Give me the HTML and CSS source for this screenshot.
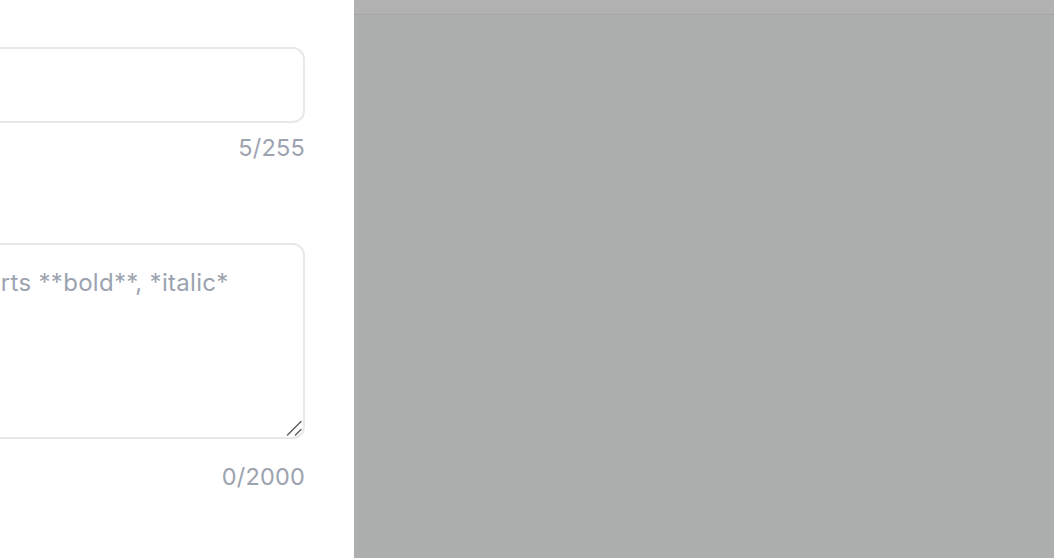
FILE: index.html
```html
<!DOCTYPE html>
<html lang="en">
<head>
    <meta charset="UTF-8">
    <title>Edit item</title>
    <link rel="stylesheet" href="styles.css">
</head>
<body>
<div class="page">
    <aside class="panel">
        <form class="form">
            <div class="field field-title">
                <input class="input" type="text" value="">
                <div class="count">5/255</div>
            </div>
            <div class="field field-desc">
                <div class="area-wrap">
                    <textarea class="area" placeholder="Supports **bold**, *italic*"></textarea>
                    <svg class="grip" width="16" height="16" viewBox="0 0 16 16">
                        <path d="M1.5 15 L15 1.5 M9.5 15 L15 9.5" stroke="#5b5b5b" stroke-width="1.4" fill="none" stroke-linecap="round"/>
                    </svg>
                </div>
                <div class="count">0/2000</div>
            </div>
        </form>
    </aside>
    <main class="backdrop">
        <div class="backdrop-head"></div>
        <div class="backdrop-body"></div>
    </main>
</div>
</body>
</html>
```

FILE: styles.css
```css
html, body{
    margin: 0;
    padding: 0;
    height: 100%;
}
body{
    font-family: Inter, "Noto Sans", sans-serif;
    overflow: hidden;
}
.page{
    display: flex;
    height: 100%;
}
.panel{
    width: 354px;
    flex: none;
    background: #fff;
    overflow: hidden;
    padding: 47px 49px 0 0;
    box-sizing: border-box;
}
.form{
    margin-left: -94px;
}
.field{
    display: flex;
    flex-direction: column;
}
.input, .area{
    box-sizing: border-box;
    width: 100%;
    border: 2px solid #e7e8eb;
    border-radius: 12px;
    font-family: inherit;
    font-size: 24px;
    line-height: 36px;
    letter-spacing: 0.3px;
    color: #111827;
    background: #fff;
    outline: none;
}
.input{
    height: 76px;
    padding: 0 18px;
}
.area-wrap{
    position: relative;
}
.area{
    display: block;
    height: 196px;
    padding: 20px 18px 16px;
    resize: none;
}
.area::placeholder{
    color: #9ca3af;
}
.grip{
    position: absolute;
    right: 3px;
    bottom: 3px;
}
.count{
    align-self: flex-end;
    font-size: 23.5px;
    line-height: 31px;
    letter-spacing: 0.2px;
    color: #9ca3af;
    margin-top: 9px;
}
.field-desc{
    margin-top: 80px;
}
.field-desc .count{
    margin-top: 22px;
}
.backdrop{
    flex: 1;
    display: flex;
    flex-direction: column;
    background: #adaeae;
}
.backdrop-head{
    height: 14px;
    background: #b1b1b1;
    border-bottom: 1px solid #a4a4a4;
}
.backdrop-body{
    flex: 1;
}
```
